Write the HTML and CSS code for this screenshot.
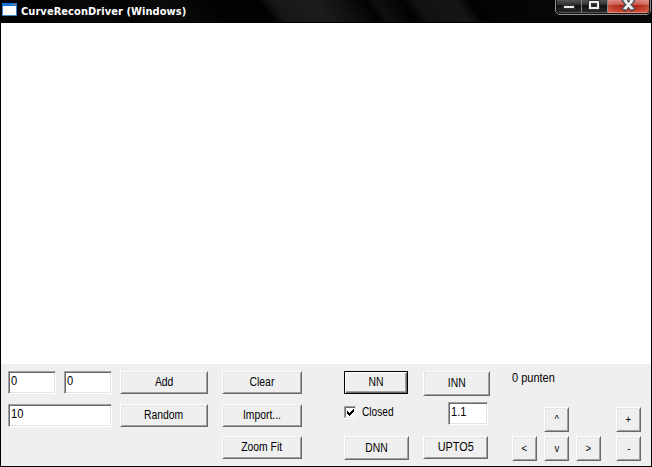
FILE: index.html
```html
<!DOCTYPE html>
<html lang="en">
<head>
<meta charset="utf-8">
<title>CurveReconDriver (Windows)</title>
<link rel="stylesheet" href="styles.css">
</head>
<body>
<div class="window">
  <header class="titlebar">
    <svg class="app-icon" width="16" height="14" viewBox="0 0 16 14" shape-rendering="crispEdges">
      <rect x="0" y="1" width="15" height="13" fill="#3f7fc4"/>
      <rect x="0" y="1" width="15" height="3" fill="#1471d8"/>
      <rect x="1" y="4" width="13" height="9" fill="#fff"/>
      <rect x="10" y="2" width="1" height="1" fill="#8fc4ff"/>
      <rect x="12" y="2" width="2" height="1" fill="#e4673c"/>
    </svg>
    <h1 class="title">CurveReconDriver (Windows)</h1>
    <svg class="controls" width="97" height="15" viewBox="0 0 97 15">
      <defs>
        <linearGradient id="dark" x1="0" y1="0" x2="0" y2="1">
          <stop offset="0" stop-color="#555"/><stop offset=".35" stop-color="#303030"/>
          <stop offset=".36" stop-color="#111"/><stop offset="1" stop-color="#292929"/>
        </linearGradient>
        <linearGradient id="red" x1="0" y1="0" x2="0" y2="1">
          <stop offset="0" stop-color="#dc8c82"/><stop offset=".35" stop-color="#c95b4c"/>
          <stop offset=".36" stop-color="#a82311"/><stop offset="1" stop-color="#d14d37"/>
        </linearGradient>
        <linearGradient id="shine" x1="0" y1="0" x2="1" y2="0">
          <stop offset="0" stop-color="#e9a095" stop-opacity=".3"/><stop offset=".3" stop-color="#d55" stop-opacity="0"/>
          <stop offset=".7" stop-color="#d55" stop-opacity="0"/><stop offset="1" stop-color="#efaa9f" stop-opacity=".3"/>
        </linearGradient>
      </defs>
      <path d="M.5 0V11.500L3.500 14.500H92.500L95.500 11.500V0" fill="#151515" stroke="#8f8f8f"/>
      <path d="M2 0H26V13H4L2 11Z" fill="url(#dark)"/>
      <path d="M27 0H52V13H27Z" fill="url(#dark)"/>
      <path d="M53 0H94V11L92 13H53Z" fill="url(#red)"/>
      <path d="M53 0H94V11L92 13H53Z" fill="url(#shine)"/>
      <path d="M26.500 0V13M52.500 0V13" stroke="#858585"/>
      <path d="M4 12.500H26M27 12.500H52" stroke="#555"/>
      <path d="M53 12.500H92" stroke="#e28a7a"/>
      <rect x="8.500" y="5.500" width="11" height="3" fill="#e8e8e8" stroke="#333"/>
      <rect x="35" y="2" width="8" height="6" fill="none" stroke="#333" stroke-width="4"/>
      <rect x="35" y="2" width="8" height="6" fill="none" stroke="#ededed" stroke-width="2"/>
      <path d="M70 1L77 8.500M77 1L70 8.500" stroke="#444854" stroke-width="5" stroke-linecap="square"/>
      <path d="M70 1L77 8.500M77 1L70 8.500" stroke="#eee" stroke-width="2.600"/>
      <path d="M68.500 .7H72M75 .7H78.500M68.500 8.500H72M75 8.500H78.500" stroke="#eee" stroke-width="1.500"/>
    </svg>
  </header>
  <main class="canvas"></main>
  <section class="panel">
    <div class="points">
      <div class="field" contenteditable><span>0</span></div>
      <div class="field" contenteditable><span>0</span></div>
      <button class="btn"><span>Add</span></button>
      <div class="field wide" contenteditable><span>10</span></div>
      <button class="btn"><span>Random</span></button>
    </div>
    <div class="files">
      <button class="btn"><span>Clear</span></button>
      <button class="btn"><span>Import...</span></button>
      <button class="btn zoom-fit"><span>Zoom Fit</span></button>
    </div>
    <div class="algorithms">
      <button class="btn default"><span>NN</span></button>
      <button class="btn inn"><span>INN</span></button>
      <label class="closed">
        <svg width="13" height="13" viewBox="0 0 13 13" shape-rendering="crispEdges">
          <path d="M0 0H13V13H0Z" fill="#fff"/>
          <path d="M0 0H12V1H1V12H0Z" fill="#a0a0a0"/>
          <path d="M1 1H11V2H2V11H1Z" fill="#696969"/>
          <path d="M11 1H12V12H1V11H11Z" fill="#e3e3e3"/>
          <path d="M3 5H4V6H5V7H6V6H7V5H8V4H9V3H10V6H9V7H8V8H7V9H6V10H5V9H4V8H3Z" fill="#000"/>
        </svg>
        <span>Closed</span>
      </label>
      <div class="field factor" contenteditable><span>1.1</span></div>
      <button class="btn dnn"><span>DNN</span></button>
      <button class="btn upto"><span>UPTO5</span></button>
    </div>
    <div class="view">
      <p class="count"><span>0 punten</span></p>
      <div class="pad">
        <button class="btn up"><span>^</span></button>
        <button class="btn plus"><span>+</span></button>
        <button class="btn"><span>&lt;</span></button>
        <button class="btn"><span>v</span></button>
        <button class="btn"><span>&gt;</span></button>
        <button class="btn minus"><span>-</span></button>
      </div>
    </div>
  </section>
</div>
</body>
</html>
```
FILE: styles.css
```css
* { box-sizing: border-box; }
body { margin: 0; }

.window {
  width: 652px;
  height: 467px;
  display: flex;
  flex-direction: column;
  border: solid #000;
  border-width: 0 1px 1px;
  background: #efefef;
  overflow: hidden;
}

.titlebar {
  height: 23px;
  display: flex;
  align-items: flex-start;
  border-bottom: 1px solid #000;
  padding-left: 1px;
  background: linear-gradient(55deg, #020202 0 6%, #0a0a0a 14%, #030303 20%, #0b0b0b 26%, #020202 34%, #020202 41%, #171717 43%, #1c1c1c 49%, #111 53%, #030303 57%, #0f0f0f 58.5%, #020202 62.5%, #121212 64.5%, #151515 70.5%, #030303 72.5%, #060707 85%, #070a08 100%);
}
.app-icon { margin-top: 2px; }
.title {
  margin: 4px 0 0 3px;
  font: bold 11px/15px "DejaVu Sans Condensed", "DejaVu Sans", sans-serif;
  font-stretch: condensed;
  letter-spacing: .06px;
  color: #fff;
  white-space: nowrap;
}
.controls { margin-left: auto; margin-right: -1px; }

.canvas { height: 341px; background: #fff; }

.panel {
  height: 102px;
  display: flex;
  padding: 7px 0 0 7px;
  font: 12.5px/15px "Liberation Sans", Arial, sans-serif;
  color: #000;
}
/* Narrow interface lettering */
.panel span {
  display: inline-block;
  transform: scaleX(.83);
  white-space: pre;
}

.field {
  height: 23px;
  padding: 2px 0 0 2px;
  border: 1px solid;
  border-color: #a0a0a0 #fff #fff #a0a0a0;
  box-shadow: inset 1px 1px #696969, inset -1px -1px #e3e3e3;
  background: #fff;
}
.field span, .count span, .closed span { transform-origin: left; }
.panel .field span { transform: scaleX(.89); }
.panel .count span { transform: scaleX(.88); }
.panel .closed span { transform: scaleX(.81); }
.panel .upto span { transform: scaleX(.87); }

.btn {
  padding: 0;
  border: 1px solid;
  border-color: #fff #696969 #696969 #fff;
  box-shadow: inset 1px 1px #e3e3e3, inset -1px -1px #a0a0a0;
  background: #efefef;
  font: inherit;
  color: #000;
}

.points {
  display: grid;
  grid-template-columns: 48px 48px 88px;
  grid-template-rows: 23px 23px;
  gap: 10px 8px;
}
.wide { grid-column: span 2; }

.files {
  margin-left: 14px;
  width: 80px;
  display: grid;
  grid-template-rows: 23px 23px 23px;
  row-gap: 10px;
  align-content: start;
}
.zoom-fit { margin-top: -1px; height: 23px; }

.algorithms {
  margin-left: 42px;
  display: grid;
  grid-template-columns: 65px 67px;
  grid-template-rows: 31px 34px 24px;
  column-gap: 14px;
  align-content: start;
  align-items: start;
}
.default {
  width: 64px;
  height: 23px;
  border-color: #000;
  box-shadow: inset 1px 1px #fff, inset -1px -1px #696969, inset -2px -2px #a0a0a0;
}
.inn { height: 25px; }
.factor { width: 40px; margin-left: 25px; }
.dnn { height: 24px; }
.upto { width: 65px; height: 23px; }
.closed { display: flex; gap: 5px; margin-top: 4px; }
.closed span { margin-top: -1px; }

.view { margin-left: 22px; width: 129px; }
.count { margin: 0; height: 36px; }
.pad {
  display: grid;
  grid-template-columns: 25px 25px 25px 33px;
  grid-template-rows: 25px 25px;
  column-gap: 7px;
  row-gap: 4px;
}
.pad .btn { font-size: 11.5px; }
.up { grid-column: 2; }
.plus { grid-column: 4; }
.plus, .minus { margin-left: 8px; }
```
